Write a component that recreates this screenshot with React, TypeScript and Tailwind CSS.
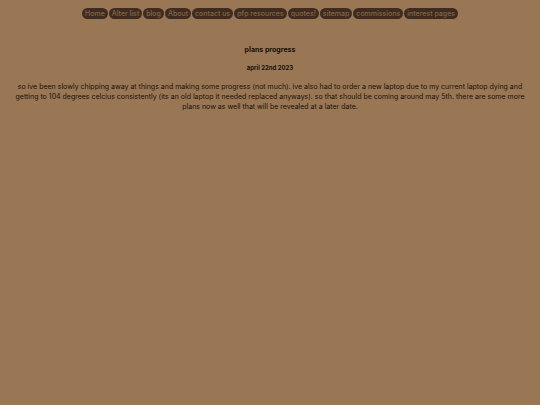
const links = [
  { label: "Home", href: "#home" },
  { label: "Alter list", href: "#alters" },
  { label: "blog", href: "#blog" },
  { label: "About", href: "#about" },
  { label: "contact us", href: "#contact" },
  { label: "pfp resources", href: "#pfp" },
  { label: "quotes!", href: "#quotes" },
  { label: "sitemap", href: "#sitemap" },
  { label: "commissions", href: "#commissions" },
  { label: "interest pages", href: "#interests" },
];

export default function App() {
  return (
    <div className="min-h-screen bg-[#997755] px-2 pt-2 text-center font-['Inter',sans-serif] text-[7px] leading-[10px] text-[#1a1008]">
      {/* Navigation */}
      <nav className="flex flex-wrap justify-center gap-px">
        {links.map((link) => (
          <a key={link.href} href={link.href} className="rounded-full bg-[#402c1f] px-[3px] font-medium leading-[11px] text-[#846548]">
            {link.label}
          </a>
        ))}
      </nav>

      {/* Blog post */}
      <main>
        <h1 className="mt-[26px] font-bold">plans progress</h1>
        <h2 className="mt-2 text-[6px] font-bold">april 22nd 2023</h2>
        <p className="mt-[9px]">
          so ive been slowly chipping away at things and making some progress (not much). ive also had to order a new laptop due to my current laptop dying and getting to 104 degrees celcius consistently (its an old laptop it needed replaced anyways). so that should be coming around may 5th. there are some more plans now as well that will be revealed at a later date.
        </p>
      </main>
    </div>
  );
}
